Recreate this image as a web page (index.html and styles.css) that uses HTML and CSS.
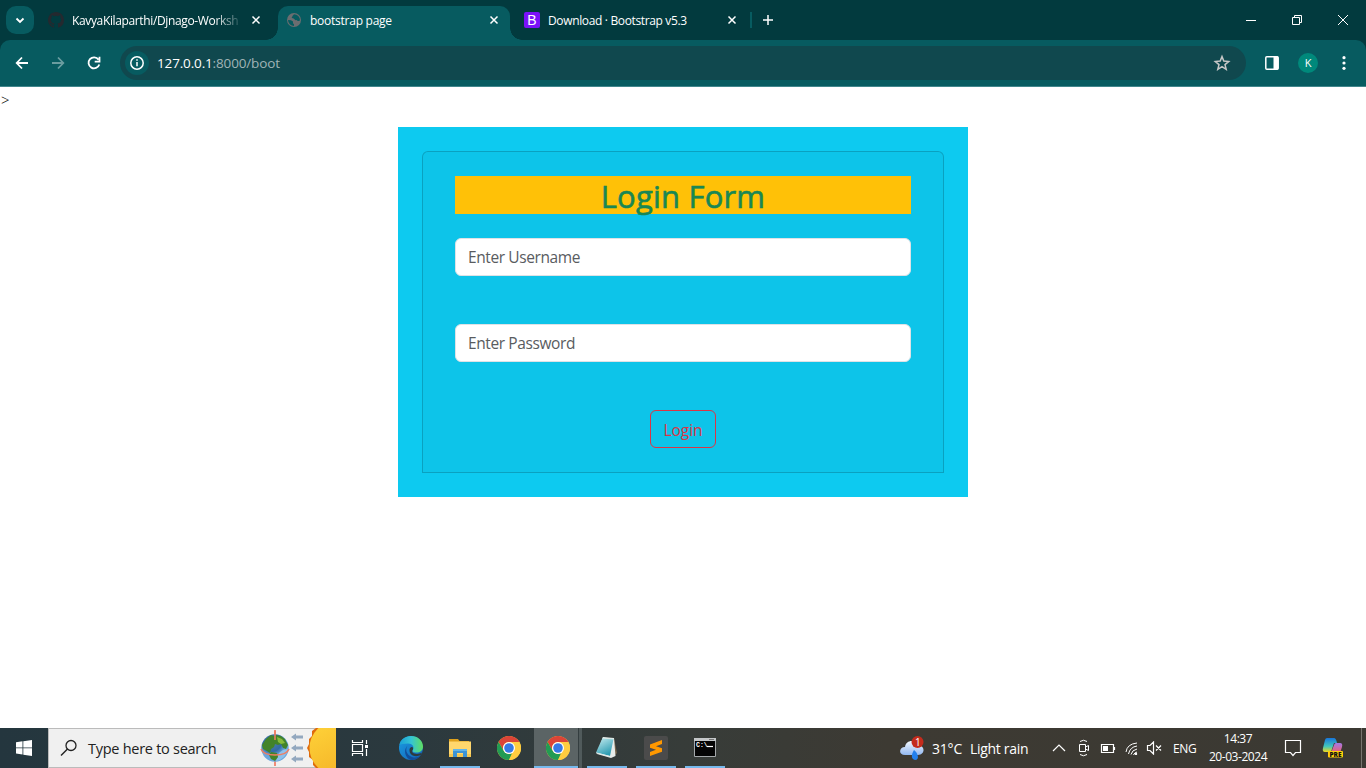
FILE: index.html
```html
<!DOCTYPE html>
<html lang="en">
<head>
<meta charset="utf-8">
<title>bootstrap page</title>
<link rel="stylesheet" href="styles.css">
</head>
<body>
<header class="browser">
  <div class="tabstrip">
    <button class="tab-search" aria-label="Search tabs"><svg width="28" height="28" viewBox="0 0 28 28"><path d="M10.500 12.500l3.500 3.500 3.500-3.500" class="line w17"/></svg></button>
    <div class="tab tab-first">
      <svg class="favicon" width="16" height="16" viewBox="0 0 16 16"><path fill="#24292f" d="M8 0C3.58 0 0 3.58 0 8c0 3.54 2.29 6.53 5.47 7.59.4.07.55-.17.55-.38v-1.49c-2.01.37-2.53-.49-2.69-.94-.09-.23-.48-.94-.82-1.13-.28-.15-.68-.52-.01-.53.63-.01 1.08.58 1.23.82.72 1.21 1.87.87 2.33.66.07-.52.28-.87.51-1.07-1.78-.2-3.64-.89-3.64-3.95 0-.87.31-1.59.82-2.15-.08-.2-.36-1.02.08-2.12 0 0 .67-.21 2.2.82a7.6 7.6 0 014 0c1.53-1.04 2.2-.82 2.2-.82.44 1.1.16 1.92.08 2.12.51.56.82 1.27.82 2.15 0 3.07-1.87 3.75-3.65 3.95.29.25.54.73.54 1.48v2.2c0 .21.15.46.55.38A8 8 0 0016 8c0-4.42-3.58-8-8-8z"/></svg>
      <span class="tab-title faded">KavyaKilaparthi/Djnago-Worksh</span>
      <svg class="close" width="12" height="12" viewBox="0 0 12 12"><path d="M2.5 2.5l7 7m0-7l-7 7" class="line w15"/></svg>
    </div>
    <div class="tab tab-active">
      <svg class="favicon" width="16" height="16" viewBox="0 0 16 16"><circle cx="8" cy="8" r="7" fill="#6b6d70"/><path fill="#075b60" d="M2 8l3 .2 2 1.4v2l1 .3V14a6 6 0 01-6-6zM8 2.2c-.4 1-1.3.9-1.4 1.7-.1.9-.9.7-.9 1.7 0 .9 2.1.8 2.6 1.5.5.8 1.1 1.4 2 .9.6-.4.9 1.1 2 1.1.9 0 1.4-.4 1.7-.8A6 6 0 008 2.2z"/></svg>
      <span class="tab-title t-active">bootstrap page</span>
      <svg class="close" width="12" height="12" viewBox="0 0 12 12"><path d="M2.5 2.5l7 7m0-7l-7 7" class="line w15"/></svg>
    </div>
    <div class="tab tab-last">
      <span class="favicon boot-icon">B</span>
      <span class="tab-title t-last">Download · Bootstrap v5.3</span>
      <svg class="close" width="12" height="12" viewBox="0 0 12 12"><path d="M2.5 2.5l7 7m0-7l-7 7" class="line w15"/></svg>
    </div>
    <span class="tab-sep"></span>
    <svg class="new-tab" width="12" height="12" viewBox="0 0 12 12"><path d="M6 1v10M1 6h10" class="line w15"/></svg>
    <div class="window-buttons">
      <svg width="46" height="40" viewBox="0 0 46 40"><path d="M18 20.5h10" class="line"/></svg>
      <svg width="46" height="40" viewBox="0 0 46 40"><path d="M18.5 17.5h7v7h-7zM20.500 17v-1.500h7v7H26" class="line"/></svg>
      <svg width="46" height="40" viewBox="0 0 46 40"><path d="M18 15l10 10m0-10l-10 10" class="line"/></svg>
    </div>
  </div>
  <div class="toolbar">
    <svg class="nav" width="36" height="36" viewBox="0 0 36 36"><path d="M24 18H13m5-5.500L12.700 18l5.300 5.500" class="line w17"/></svg>
    <svg class="nav dim" width="36" height="36" viewBox="0 0 36 36"><path d="M12 18h11m-5-5.500l5.300 5.500-5.300 5.500" class="line w17"/></svg>
    <svg class="nav" width="36" height="36" viewBox="0 0 36 36"><path d="M22.500 14.600A5.500 5.500 0 1023.300 19.500M23.500 11.800v4.800h-4.800" class="line w17"/></svg>
    <div class="address">
      <span class="site-info"><svg width="24" height="24" viewBox="0 0 24 24"><circle cx="12" cy="12" r="6.200" class="line w15"/><path d="M12 11v4.200M12 8.300v1.500" class="line w15"/></svg></span>
      <span class="url"><b>127.0.0.1</b>:8000/boot</span>
      <svg class="star" width="20" height="20" viewBox="0 0 20 20"><path d="M10 3.600l1.800 4.500 4.900.4-3.700 3.100 1.200 4.700-4.200-2.600-4.200 2.600L7 11.600 3.300 8.500l4.900-.4z"/></svg>
    </div>
    <div class="tools">
      <svg width="36" height="36" viewBox="0 0 36 36"><rect x="11.800" y="11.800" width="12.400" height="12.400" rx="1" class="line w15"/><path fill="#fff" d="M19.500 11.500H24v13h-4.500z"/></svg>
      <span class="avatar">K</span>
      <svg width="36" height="36" viewBox="0 0 36 36"><g fill="#fff"><circle cx="18" cy="12.700" r="1.600"/><circle cx="18" cy="18" r="1.600"/><circle cx="18" cy="23.300" r="1.600"/></g></svg>
    </div>
  </div>
</header>

<main class="page">
  <div class="stray">&gt;</div>
  <section class="panel">
    <form class="card">
      <h2 class="heading"><span>Login Form</span></h2>
      <input class="field user" type="text" placeholder="Enter Username">
      <input class="field pass" type="password" placeholder="Enter Password">
      <button class="login" type="button">Login</button>
    </form>
  </section>
</main>

<footer class="taskbar">
  <div class="start"><svg width="16" height="16" viewBox="0 0 16 16"><path fill="#fff" d="M0 2.200L6.500 1.300v6.200H0zM7.300 1.200L16 0v7.500H7.300zM0 8.300h6.500v6.200L0 13.600zM7.300 8.300H16V16l-8.700-1.200z"/></svg></div>
  <div class="search">
    <svg width="18" height="18" viewBox="0 0 18 18"><circle cx="11" cy="6.500" r="5" fill="none" stroke="#222" stroke-width="1.300"/><path d="M7.500 10L1 16.500" stroke="#222" stroke-width="1.400"/></svg>
    <span>Type here to search</span>
    <svg class="doodle" width="78" height="40" viewBox="0 0 78 40">
      <defs>
        <radialGradient id="sea" cx=".4" cy=".3"><stop offset="0" stop-color="#4d7fa6"/><stop offset=".65" stop-color="#326ba6"/><stop offset="1" stop-color="#6da6dd"/></radialGradient>
        <linearGradient id="sun" x1="0" x2=".5" y2="1"><stop stop-color="#ffd43a"/><stop offset="1" stop-color="#f5b629"/></linearGradient>
      </defs>
      <path d="M17 2v36" stroke="#f26b50" stroke-width="1.500"/>
      <circle cx="17" cy="20" r="13.700" fill="url(#sea)"/>
      <path fill="#8ec1ec" d="M18 33l3-8 4-3 5-1a14 14 0 01-12 12z"/>
      <path fill="#42832a" d="M8 11l5-4 3 1 2-1 5 1 4 3 3 6-2 4-3-1-2-4-3 1-3-1-1 3-3 2-1 4-3-2-4-2-1-4zM13 24l6 1 1 4-3 4-4-2-2-4z"/>
      <path fill="#86bc3b" d="M19 9l5 2 3 4-4 1-3-2z"/>
      <path d="M17 3v9M3 21c3 8 25 8 28 0" fill="none" stroke="#f27d61" stroke-width="1.500"/>
      <path fill="#93a8bf" d="M33 9l5-3.500V7.500h7V10.500h-7v2zM33 20l5-3.500V18.500h7V21.500h-7v2zM33 31l5-3.500V29.500h7V32.500h-7v2z"/>
      <path fill="#df6b0c" d="M58 0l-4 3v5l-3 3v5l-2 4 2 4v5l4 3v5l3 3h20V0z"/><circle cx="78" cy="20" r="26.500" fill="url(#sun)"/>
    </svg>
  </div>
  <div class="apps">
    <span class="app view"><svg width="24" height="24" viewBox="0 0 24 24"><path d="M4.500 4v2.500h10V4M4.500 20v-2.500h10V20M4.500 8.500h10v7h-10zM18.500 4v4m0 5v7" class="line w12"/><path fill="#fff" d="M17 9h3v3h-3z"/></svg></span>
    <span class="app"><svg width="24" height="24" viewBox="0 0 24 24">
      <defs><linearGradient id="e1"><stop stop-color="#1a9fd8"/><stop offset=".5" stop-color="#35c4d3"/><stop offset="1" stop-color="#60df61"/></linearGradient><linearGradient id="e2" x2="1" y2="1"><stop stop-color="#1b9de2"/><stop offset="1" stop-color="#1260b6"/></linearGradient></defs>
      <circle cx="12" cy="12" r="12" fill="url(#e2)"/><path fill="url(#e1)" d="M.3 9C1.500 3.500 6 0 12 0c7 0 12 5 12 10.500 0 4-3 6-6.500 6-4 0-4.500-1.500-3.500-3 1.500-2.500-.5-6-5-6-4 0-7.500 1-8.700 1.500z"/><path fill="#124e9b" d="M9.500 9C5.500 12 7 19 13 21c4 1.400 7 0 9-2-2.500 4-6.500 5-10 5C6 22 3.500 13 9.500 9z"/><path fill="#2e3a3e" d="M13.800 13.800c-1.800 2.200.5 4.200 4.200 4.200 2 0 4-.8 5-1.500l-1 2.500c-5 2.500-12 1-11.500-5.500.2-2 2-3 3-2.300.8.600.8 1.800.3 2.600z"/></svg></span>
    <span class="app open"><svg width="24" height="24" viewBox="0 0 24 24"><path fill="#dfa11c" d="M1 3h9l1.500 2H21v3H1z"/><path fill="#ffd76d" d="M1 5.500h22V21H1z"/><path fill="#f4c64f" d="M1 18h22v3H1z"/><path fill="#3c94d5" d="M5 13h14v8h-4v-4H9v4H5z"/><path fill="#62b5e9" d="M5 13h14v2H5z"/></svg></span>
    <span class="app"><svg width="24" height="24" viewBox="0 0 24 24"><g id="chrome"><circle cx="12" cy="12" r="12" fill="#ffcd40"/><path fill="#db4437" d="M1.600 6A12 12 0 0122.400 6H12a6 6 0 00-5.200 9z"/><path fill="#229b53" d="M1.600 6l5.200 9a6 6 0 008.200 2.200L12 24A12 12 0 011.600 6z"/><path fill="#ffcd40" d="M12 24l5.200-9A6 6 0 0012 6h10.400A12 12 0 0112 24z"/><circle cx="12" cy="12" r="6" fill="#fff"/><circle cx="12" cy="12" r="4.800" fill="#3679e5"/></g></svg></span>
    <span class="app open current"><svg width="24" height="24" viewBox="0 0 24 24"><use href="#chrome"/></svg></span>
    <span class="app open"><svg width="24" height="24" viewBox="0 0 24 24"><defs><linearGradient id="note" x2=".5" y2="1"><stop stop-color="#c9eef1"/><stop offset="1" stop-color="#2c9cb2"/></linearGradient></defs><path fill="#76654b" d="M19 2l3 15-3 3z"/><path fill="#e8ecea" d="M8 1l11 1 1.500 18-4.500 2-14-4z"/><path fill="url(#note)" d="M7.500 2l11 1L15 20 1 16.500z"/><path d="M1 16.800l14 3.700M7.500 2l11 1" stroke="#dce9e8"/></svg></span>
    <span class="app open"><svg width="24" height="24" viewBox="0 0 24 24"><rect width="24" height="24" rx="2" fill="#4b4b4b"/><path fill="#ff9800" d="M6 8.500L18 4v4l-6 2.300 6 2v3.500L6 20v-4l6-2.200-6-2z"/></svg></span>
    <span class="app open"><svg width="24" height="24" viewBox="0 0 24 24"><path fill="#050505" stroke="#a5a9ab" d="M1.500 2.500h21v18h-21z"/><path fill="#c4c7c9" d="M1 2h22v3H1z"/><path stroke="#777" d="M16 3.500h5"/><text x="3" y="11" fill="#fff" font-family="Liberation Mono" font-size="6.500" font-weight="bold">C:\</text><path stroke="#fff" stroke-width="1.200" d="M14 10.500h6"/></svg></span>
  </div>
  <div class="tray">
    <svg class="weather" width="28" height="26" viewBox="0 0 28 26"><defs><linearGradient id="cl" x2="0" y2="1"><stop stop-color="#f3f8ff"/><stop offset="1" stop-color="#92b8f0"/></linearGradient></defs><path fill="url(#cl)" d="M6 20c-7 0-6-8 0-8 1-7 10-8 12-2 8-1 9 10 1 10z"/><path fill="#2380ed" d="M15 15c4 3 6 10 1 10-4-1-4-5-1-10z"/><circle cx="18.500" cy="7" r="6" fill="#c42b1c"/><text x="16" y="10.600" fill="#fff" font-family="Open Sans" font-size="10">1</text></svg>
    <span class="temp">31°C</span><span class="rain">Light rain</span>
    <div class="status">
      <svg width="14" height="14" viewBox="0 0 14 14"><path d="M1 10l6-6 6 6" class="line w12"/></svg>
      <svg width="14" height="18" viewBox="0 0 14 18"><path d="M3.500 5.500h6v7h-6zM9.500 8l3-1.500v5l-3-1.500M4 2.500Q7.500 0 11 2.500M4 15.500Q7.500 18 11 15.500" class="line"/></svg>
      <svg width="16" height="14" viewBox="0 0 16 14"><path d="M1.500 3.500h12v8h-12zM14.500 6v3" class="line w12"/><path fill="#fff" d="M3 5h5v5H3z"/></svg>
      <svg class="wifi" width="14" height="14" viewBox="0 0 14 14"><path d="M1 11Q2 3 12 2M3.500 13Q5 6 12 5M6 13.500Q7 9 12 8M8.500 14q1-2.500 3.500-3" class="line"/><circle cx="11" cy="13" r="1.200" fill="#fff"/></svg>
      <svg class="volume" width="18" height="14" viewBox="0 0 18 14"><path d="M2.500 4.500H5L8.500 1v12L5 9.500H2.500zM11 4.500l5 5m0-5l-5 5" class="line w12"/></svg>
    </div>
    <span class="lang">ENG</span>
    <div class="clock"><span class="time">14:37</span><span class="date">20-03-2024</span></div>
    <svg class="notice" width="18" height="18" viewBox="0 0 18 18"><path d="M1.500 1.500h15v12h-5L9 16.500l-2.500-3h-5z" class="line w12"/></svg>
    <svg class="copilot" width="22" height="22" viewBox="0 0 22 22"><defs><linearGradient id="c1" x2="0" y2="1"><stop stop-color="#1876dc"/><stop offset=".6" stop-color="#42c7bb"/><stop offset="1" stop-color="#f1d91c"/></linearGradient><linearGradient id="c2" x2="0" y2="1"><stop stop-color="#a477e8"/><stop offset="1" stop-color="#f25f68"/></linearGradient></defs><path fill="url(#c1)" d="M5 1h7q2 0 3 5h-3l-3 9H3q-3 0-2-4L3 3q.5-2 2-2z"/><path fill="url(#c2)" d="M14 6h4q3 0 2 4l-2 6H9l3-8q.5-2 2-2z"/><rect x="6" y="14" width="15" height="6.500" rx="1" fill="#ffce0a"/><text x="7.500" y="19.600" textLength="12" fill="#111" font-family="Open Sans" font-size="6.500" font-weight="800">PRE</text></svg>
    <i class="desktop-edge"></i>
  </div>
</footer>
</body>
</html>
```
FILE: styles.css
```css
* { box-sizing: border-box; }
body {
  margin: 0;
  width: 1366px;
  height: 768px;
  overflow: hidden;
  display: flex;
  flex-direction: column;
  background: #fff;
  font-family: "Open Sans", "Noto Sans", sans-serif;
}
svg { display: block; flex: none; }
button, input { font-family: inherit; }
.line { fill: none; stroke: #fff; stroke-width: 1; }
.w12 { stroke-width: 1.2; }
.w15 { stroke-width: 1.5; }
.w17 { stroke-width: 1.8; }

/* Browser chrome */
.browser { height: 87px; flex: none; background: #023a3e; border-bottom: 1px solid #41868c; }
.tabstrip { height: 40px; display: flex; align-items: center; }
.tab-search { width: 28px; height: 28px; margin-left: 6px; padding: 0; border: 0; border-radius: 10px; background: #075b60; }
.tab { display: flex; align-items: center; color: #fff; font-size: 12px; white-space: nowrap; }
.tab-first { width: 244px; padding-left: 14px; }
.tab-active {
  position: relative;
  width: 232px;
  height: 34px;
  align-self: flex-end;
  padding: 0 0 6px 8px;
  background: #075b60;
  border-radius: 10px 10px 0 0;
}
.tab-active::before, .tab-active::after {
  content: "";
  position: absolute;
  bottom: 0;
  width: 12px;
  height: 12px;
}
.tab-active::before { left: -12px; background: radial-gradient(circle at 0 0, transparent 11.5px, #075b60 12px); }
.tab-active::after { right: -12px; background: radial-gradient(circle at 100% 0, transparent 11.5px, #075b60 12px); }
.tab-last { width: 240px; padding-left: 14px; }
.favicon { flex: none; width: 16px; height: 16px; margin-right: 8px; }
.boot-icon { border-radius: 2px; background: #7a11f8; text-align: center; font: 14px/16px "Liberation Sans", sans-serif; }
.tab-title { width: 168px; padding-top: 1px; letter-spacing: -0.25px; }
.faded { letter-spacing: -0.36px; -webkit-mask-image: linear-gradient(90deg, #000 85%, transparent 102%); mask-image: linear-gradient(90deg, #000 85%, transparent 102%); }
.t-last { letter-spacing: -0.35px; }
.close { margin-left: 10px; }
.tab-sep { width: 2px; height: 16px; background: #075b60; }
.new-tab { margin-left: 10px; }
.window-buttons { display: flex; margin-left: auto; }
.toolbar { height: 46px; display: flex; align-items: center; padding-left: 4px; background: #075b60; border-radius: 10px 10px 0 0; }
.dim { opacity: .4; }
.address { width: 1126px; height: 34px; margin-left: 8px; padding: 0 14px 0 5px; display: flex; align-items: center; border-radius: 17px; background: #10484e; }
.site-info { border-radius: 50%; background: #075b60; }
.url { margin-left: 8px; padding-bottom: 1px; color: #a0b4b6; font-size: 13.5px; letter-spacing: -0.15px; }
.url b { color: #fff; font-weight: 400; }
.star { margin-left: auto; fill: none; stroke: #c7c7c7; stroke-width: 1.5; }
.tools { display: flex; align-items: center; margin-left: 8px; }
.avatar { width: 20px; height: 20px; margin: 0 8px; border-radius: 50%; background: #00897b; color: #fff; font-size: 11px; line-height: 20px; text-align: center; }

/* Page */
.page { flex: 1; }
.stray { height: 40px; padding: 4px 0 0 1px; color: #000; font: 15px/18px "Liberation Serif", serif; }
.panel { width: 570px; height: 370px; margin: 0 auto; padding: 24px; background: #0dcaf0; }
.card {
  height: 322px;
  padding: 24px 32px;
  display: flex;
  flex-direction: column;
  border: 1px solid rgba(0, 0, 0, .176);
  border-radius: 6px 6px 0 0;
  background: rgba(33, 37, 41, .03);
}
.heading { height: 38px; margin: 0; background: #ffc107; color: #198754; font-size: 31px; font-weight: 500; line-height: 41px; letter-spacing: 0.2px; text-align: center; -webkit-text-stroke: 0.6px #198754; }
.field { height: 38px; margin: 24px 0; padding: 6px 12px; border: 1px solid #dee2e6; border-radius: 6px; background: #fff; font-size: 15.5px; letter-spacing: -0.4px; }
.field::placeholder { color: #595c5f; opacity: 1; }
.login { width: 66px; height: 38px; margin: 24px auto 0; padding: 1px 0 0; border: 1px solid #dc3545; border-radius: 6px; background: transparent; color: #dc3545; font-size: 15.5px; }

/* Taskbar */
.taskbar { height: 40px; flex: none; display: flex; color: #fff; background: linear-gradient(90deg, #24363e, #2b393e 30%, #373c39 50%, #3d3a33 65%, #3b3933); }
.start { width: 48px; display: grid; place-items: center; }
.search { width: 288px; display: flex; align-items: center; padding-left: 11px; border: 1px solid #bbb; border-right: 0; background: #f0f0f0; color: #222; font-size: 14.5px; letter-spacing: -0.27px; white-space: nowrap; }
.search span { margin-left: 10px; }
.doodle { margin-left: auto; }
.apps { display: flex; }
.app { width: 49px; display: grid; place-items: center; }
.view { width: 50px; padding-right: 2px; }
.open { background: linear-gradient(#76b9ed, #76b9ed) center bottom / 40px 2px no-repeat; }
.current { background: linear-gradient(#76b9ed, #76b9ed) 1px bottom / 44px 2px no-repeat, linear-gradient(90deg, transparent 1px, #5b6465 1px, #5b6465 45px, #343e40 45px, #343e40 46px, #505a5b 46px); }
.tray { flex: 1; display: flex; align-items: center; font-size: 14px; white-space: nowrap; }
.weather { margin-left: 170px; }
.temp { width: 38px; margin-left: 5px; letter-spacing: -0.2px; }
.rain { width: 82px; letter-spacing: -0.3px; }
.status { display: flex; align-items: center; gap: 10px; }
.wifi { margin-left: -1px; }
.volume { margin-left: -4px; }
.lang { width: 24px; margin-left: 10px; font-size: 12px; letter-spacing: -0.3px; }
.clock { width: 60px; margin-left: 11px; display: flex; flex-direction: column; align-items: center; font-size: 12px; line-height: 18px; letter-spacing: -0.45px; }
.notice { margin-left: 16px; }
.copilot { margin-left: 20px; }
.desktop-edge { width: 1px; height: 40px; margin: 0 4px 0 auto; background: #77756f; }
```
